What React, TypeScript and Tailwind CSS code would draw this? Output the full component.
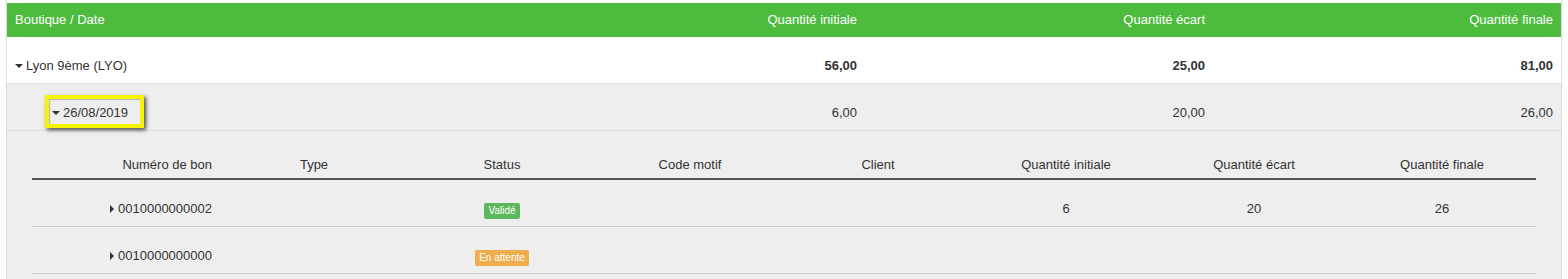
import React from "react";

const CaretDown = () => (
  <span className="inline-block w-0 h-0 border-t-[4px] border-x-[4px] border-x-transparent border-t-[#333] mr-[3px] align-middle relative -top-[1px]" />
);

const CaretRight = () => (
  <span className="inline-block w-0 h-0 border-l-[4px] border-y-[4px] border-y-transparent border-l-[#333] mr-[4px] align-middle relative -top-[1px]" />
);

const innerCols = [
  "Numéro de bon",
  "Type",
  "Status",
  "Code motif",
  "Client",
  "Quantité initiale",
  "Quantité écart",
  "Quantité finale",
];

type Bon = { num: string; status: "ok" | "wait"; qi: string; qe: string; qf: string };
const bons: Bon[] = [
  { num: "0010000000002", status: "ok", qi: "6", qe: "20", qf: "26" },
  { num: "0010000000000", status: "wait", qi: "", qe: "", qf: "" },
];

export default function App() {
  return (
    <div className="w-[1568px] h-[279px] bg-white overflow-hidden text-[13px] leading-[18px] text-[#333] [font-family:'Liberation_Sans',Arial,sans-serif]">
      <div className="ml-[6px] w-[1556px] h-full border-l border-r border-[#ddd] pt-[3px] flex flex-col">
        {/* Header */}
        <div className="grid grid-cols-[510px_348px_348px_348px] h-[34px] items-center bg-[#4dbb3e] text-white">
          <div className="px-2">Boutique / Date</div>
          <div className="px-2 text-right">Quantité initiale</div>
          <div className="px-2 text-right">Quantité écart</div>
          <div className="px-2 text-right">Quantité finale</div>
        </div>
        {/* Lyon row */}
        <div className="grid grid-cols-[510px_348px_348px_348px] bg-white border-b border-[#ddd]">
          <div className="px-2 pt-[20px] pb-[8px] whitespace-nowrap">
            <CaretDown />
            Lyon 9ème (LYO)
          </div>
          <div className="px-2 pt-[20px] pb-[8px] text-right font-bold">56,00</div>
          <div className="px-2 pt-[20px] pb-[8px] text-right font-bold">25,00</div>
          <div className="px-2 pt-[20px] pb-[8px] text-right font-bold">81,00</div>
        </div>
        {/* Date row */}
        <div className="grid grid-cols-[510px_348px_348px_348px] bg-[#eee] border-b border-[#ddd]">
          <div className="pl-[45px] pr-2 pt-[20px] pb-[8px] whitespace-nowrap">
            <span className="relative inline-block">
              <span className="absolute -left-[7px] -right-[16px] -top-[9px] -bottom-[6px] border-[4px] border-[#f5f500] shadow-[2px_2px_4px_rgba(0,0,0,0.7),inset_1px_1px_1px_rgba(0,0,0,0.25)]" />
              <span className="relative">
                <CaretDown />
                26/08/2019
              </span>
            </span>
          </div>
          <div className="px-2 pt-[20px] pb-[8px] text-right">6,00</div>
          <div className="px-2 pt-[20px] pb-[8px] text-right">20,00</div>
          <div className="px-2 pt-[20px] pb-[8px] text-right">26,00</div>
        </div>
        {/* Nested */}
        <div className="flex-1 bg-[#eee] px-[25px]">
          <div className="grid grid-cols-8 border-b-2 border-[#555]">
            {innerCols.map((c, i) => (
              <div
                key={c}
                className={`px-2 pt-[25px] pb-[4px] whitespace-nowrap ${i === 0 ? "text-right" : "text-center"}`}
              >
                {c}
              </div>
            ))}
          </div>
          {bons.map((b) => (
            <div key={b.num} className="grid grid-cols-8 border-b border-[#ccc] items-center">
              <div className="px-2 pt-[20px] pb-[8px] text-right whitespace-nowrap">
                <CaretRight />
                {b.num}
              </div>
              <div className="px-2 pt-[20px] pb-[8px]"></div>
              <div className="px-2 pt-[20px] pb-[8px] text-center">
                {b.status === "ok" ? (
                  <span className="inline-block align-middle rounded-[2px] bg-[#5cb85c] text-white text-[10px] leading-[16px] px-[4px] relative top-[1px]">
                    Validé
                  </span>
                ) : (
                  <span className="inline-block align-middle rounded-[2px] bg-[#f0ad4e] text-white text-[10px] leading-[16px] px-[4px] relative top-[1px]">
                    En attente
                  </span>
                )}
              </div>
              <div className="px-2 pt-[20px] pb-[8px]"></div>
              <div className="px-2 pt-[20px] pb-[8px]"></div>
              <div className="px-2 pt-[20px] pb-[8px] text-center">{b.qi}</div>
              <div className="px-2 pt-[20px] pb-[8px] text-center">{b.qe}</div>
              <div className="px-2 pt-[20px] pb-[8px] text-center">{b.qf}</div>
            </div>
          ))}
        </div>
      </div>
    </div>
  );
}
